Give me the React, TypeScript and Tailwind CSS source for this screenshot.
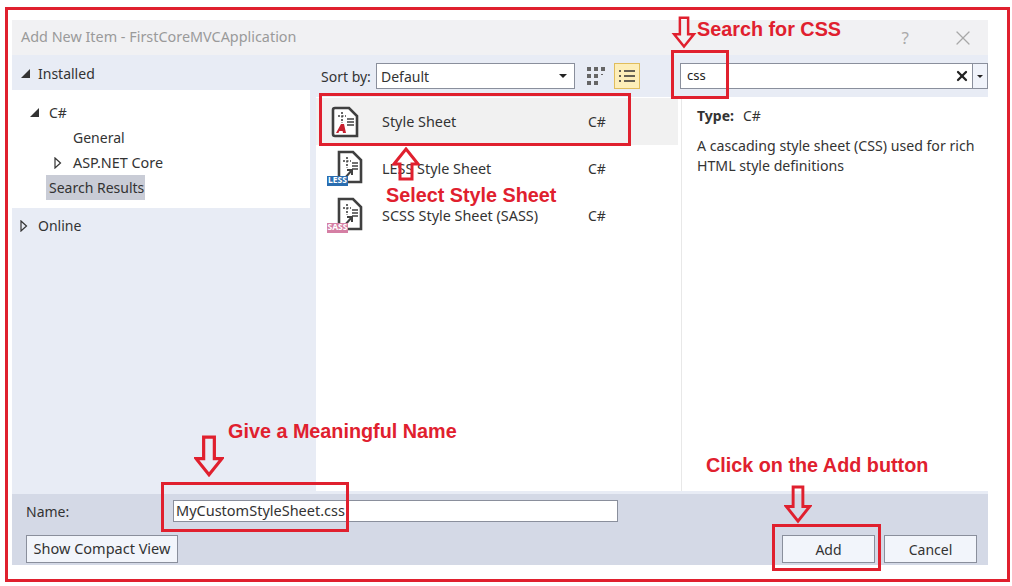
import { X } from "lucide-react";

const RED = "#e0202e";

// hollow outline arrow used by the tutorial annotations
function DownArrow({ className }: { className: string }) {
  return (
    <svg viewBox="0 0 28 40" fill="none" stroke={RED} strokeWidth="3" className={className}>
      <path d="M9 2h10v20h7L14 37 2 22h7z" />
    </svg>
  );
}

function UpArrow({ className }: { className: string }) {
  return (
    <svg viewBox="0 0 28 34" fill="none" stroke={RED} strokeWidth="3" className={className}>
      <path d="M14 2l12 15h-6v15H8V17H2z" />
    </svg>
  );
}

function Collapsed({ className }: { className: string }) {
  return (
    <svg viewBox="0 0 8 12" fill="none" stroke="#333" strokeWidth="1.2" className={className}>
      <path d="M1 1l5.5 5L1 11z" />
    </svg>
  );
}

function Expanded({ className }: { className: string }) {
  return (
    <svg viewBox="0 0 9 9" fill="#333" className={className}>
      <path d="M9 0v9H0z" />
    </svg>
  );
}

function SheetIcon({ badge, large }: { badge?: "LESS" | "SASS"; large?: boolean }) {
  const stroke = "#404040";
  return (
    <div className="relative w-[37px] h-[40px]">
      <svg viewBox="0 0 37 40" fill="none" className="absolute inset-0 w-[37px] h-[40px]">
        <path
          d={large ? "M9 6h14l8 8v20H9a2 2 0 0 1-2-2V8a2 2 0 0 1 2-2z" : "M13 3h14l8 8v22H13z"}
          fill="#fff"
          stroke={stroke}
          strokeWidth="2.6"
        />
        <path
          d={large ? "M16 10v11M12 14h8" : "M21 8v11M17 12h8"}
          stroke={stroke}
          strokeWidth="1.6"
          strokeDasharray="2 1.5"
        />
        <path
          d={large ? "M21 17h7M21 20h7M21 23h7" : "M26 14h6M26 17h6M26 20h6"}
          stroke={stroke}
          strokeWidth="1.5"
        />
        {large ? (
          <path d="M10 31l5-9h3l2 9h-3l-.4-2h-3.2l-1 2z" fill="#c8202f" />
        ) : (
          <path d="M19 29l7-8m-5 0h5v5" stroke={stroke} strokeWidth="2" />
        )}
      </svg>
      {badge && (
        <span
          className={`absolute left-[1px] bottom-[3px] h-[10px] w-[21px] flex items-center justify-center text-white text-[8.5px] font-bold leading-none ${
            badge === "LESS" ? "bg-[#2a6db0]" : "bg-[#d57fa4]"
          }`}
        >
          {badge}
        </span>
      )}
    </div>
  );
}

function ResultRow({
  name,
  badge,
  selected,
}: {
  name: string;
  badge?: "LESS" | "SASS";
  selected?: boolean;
}) {
  return (
    <div className={`flex items-center h-[47px] pl-[10px] ${selected ? "bg-[#f1f1f1]" : ""}`}>
      <div className="w-[56px]">
        <SheetIcon badge={badge} large={selected} />
      </div>
      <span className="w-[206px] text-[14.4px]">{name}</span>
      <span>C#</span>
    </div>
  );
}

function DialogButton({ label, className }: { label: string; className: string }) {
  return (
    <button className={`h-[28px] border border-[#8a8f9c] bg-[#f2f5fb] text-center ${className}`}>
      {label}
    </button>
  );
}

export default function App() {
  return (
    <div
      className="relative w-[1012px] h-[586px] bg-white overflow-hidden text-[14px] text-[#333]"
      style={{ fontFamily: '"Noto Sans", sans-serif' }}
    >
      <div className="ml-[5px] mt-[7px] w-[1005px] h-[575px] border-[3px] border-[#e0202e] pl-[4px] pt-[10px]">
        <div className="w-[976px] h-[545px] flex flex-col">
          {/* Title bar */}
          <div className="h-[35px] flex items-center justify-between pl-[9px] pr-[13px] bg-[#f1f1f3] text-[#9a9a9a]">
            <span className="text-[14.4px] pb-[2px]">Add New Item - FirstCoreMVCApplication</span>
            <div className="flex items-center gap-[42px]">
              <span className="text-[17px] text-[#aaa]">?</span>
              <X className="w-[24px] h-[24px] text-[#a8a8a8]" strokeWidth={1.2} />
            </div>
          </div>

          <div className="flex flex-1 bg-[#e8ecf5]">
            {/* Left tree */}
            <div className="w-[298px] flex flex-col">
              <div className="h-[35px] flex items-center pl-[9px] pt-[2px]">
                <Expanded className="w-[9px] h-[9px]" />
                <span className="ml-[8px]">Installed</span>
              </div>
              <div className="h-[118px] bg-white pt-[10px]">
                <div className="h-[25px] flex items-center pl-[18px]">
                  <Expanded className="w-[9px] h-[9px]" />
                  <span className="ml-[10px]">C#</span>
                </div>
                <div className="h-[25px] flex items-center pl-[61px]">General</div>
                <div className="h-[25px] flex items-center pl-[42px]">
                  <Collapsed className="w-[8px] h-[12px]" />
                  <span className="ml-[11px] text-[14.4px]">ASP.NET Core</span>
                </div>
                <div className="h-[25px] ml-[34px] w-[99px] bg-[#c9ccd6] flex items-center pl-[3px]">
                  Search Results
                </div>
              </div>
              <div className="h-[35px] flex items-center pl-[8px]">
                <Collapsed className="w-[8px] h-[12px]" />
                <span className="ml-[10px]">Online</span>
              </div>
            </div>

            {/* Results and description */}
            <div className="flex-1 ml-[6px] flex flex-col">
              <div className="h-[42px] flex items-start pt-[8px]">
                <div className="w-[364px] flex items-center">
                  <span className="ml-[5px] w-[55px]">Sort by:</span>
                  <div className="w-[199px] h-[26px] border border-[#8a8f9c] bg-white flex items-center justify-between px-[4px]">
                    <span>Default</span>
                    <span className="mr-[3px] w-0 h-0 border-x-[4px] border-x-transparent border-t-[4px] border-t-[#222]" />
                  </div>
                  <svg viewBox="0 0 20 20" fill="#666" className="ml-[11px] w-[20px] h-[20px]">
                    <path d="M1 1h4v4H1zM8 1h4v4H8zM15 1h4v4h-4zM1 8h4v4H1zM8 8h4v4H8zM15 8h2v1h-2zM1 15h4v4H1zM8 15h4v4H8z" />
                  </svg>
                  <div className="ml-[8px] w-[26px] h-[26px] bg-[#fdeeb9] border border-[#e0bd5c] flex items-center justify-center">
                    <svg viewBox="0 0 16 14" stroke="#333" strokeWidth="1.4" className="w-[16px] h-[14px]">
                      <path d="M0 2h2M5 2h11M0 7h2M5 7h11M0 12h2M5 12h11" />
                    </svg>
                  </div>
                </div>
                <div className="w-[308px] h-[26px] border border-[#8a8f9c] bg-white flex items-center">
                  <span className="flex-1 pl-[6px] text-[13px] text-[#222]">css</span>
                  <X className="w-[16px] h-[16px] mr-[2px] text-[#222]" strokeWidth={3.4} />
                  <div className="w-[15px] h-full border-l border-[#8a8f9c] bg-[#f0f3fa] flex items-center justify-center">
                    <span className="w-0 h-0 border-x-[3px] border-x-transparent border-t-[3px] border-t-[#222]" />
                  </div>
                </div>
              </div>

              <div className="flex flex-1">
                <div className="w-[365px] bg-white pt-[1px] pr-[3px]">
                  <ResultRow name="Style Sheet" selected />
                  <ResultRow name="LESS Style Sheet" badge="LESS" />
                  <ResultRow name="SCSS Style Sheet (SASS)" badge="SASS" />
                </div>
                <div className="flex-1 bg-white border-l border-[#e8e8e8] pl-[15px] pt-[9px] leading-[20px]">
                  <div>
                    <span className="font-bold">Type:</span>
                    <span className="ml-[9px]">C#</span>
                  </div>
                  <p className="mt-[10px] text-[14.15px]">
                    A cascading style sheet (CSS) used for rich
                    <br />
                    HTML style definitions
                  </p>
                </div>
              </div>
            </div>
          </div>

          {/* Name and buttons */}
          <div className="h-[74px] bg-[#d4d9e6] border-t-[3px] border-[#e8ecf5]">
            <div className="flex items-center mt-[6px] h-[22px]">
              <span className="ml-[14px] w-[147px]">Name:</span>
              <div className="w-[445px] h-[22px] border border-[#8a8f9c] bg-white pl-[2px] flex items-center text-[14.5px]">
                MyCustomStyleSheet.css
              </div>
            </div>
            <div className="flex items-center mt-[13px]">
              <DialogButton label="Show Compact View" className="ml-[14px] w-[152px] text-[14.5px]" />
              <DialogButton label="Add" className="ml-[604px] w-[93px]" />
              <DialogButton label="Cancel" className="ml-[9px] w-[93px]" />
            </div>
          </div>
        </div>
      </div>

      {/* Tutorial annotations drawn over the dialog */}
      <div
        className="pointer-events-none text-[#e0202e] font-bold text-[19.8px] leading-none"
        style={{ fontFamily: '"Liberation Sans", sans-serif' }}
      >
        <span className="absolute left-[697px] top-[20px]">Search for CSS</span>
        <span className="absolute left-[386px] top-[186px]">Select Style Sheet</span>
        <span className="absolute left-[228px] top-[422px]">Give a Meaningful Name</span>
        <span className="absolute left-[706px] top-[456px]">Click on the Add button</span>

        <div className="absolute left-[671px] top-[50px] w-[58px] h-[49px] border-[3px] border-[#e0202e]" />
        <div className="absolute left-[319px] top-[93px] w-[312px] h-[53px] border-[3px] border-[#e0202e]" />
        <div className="absolute left-[161px] top-[482px] w-[188px] h-[50px] border-[3px] border-[#e0202e]" />
        <div className="absolute left-[772px] top-[524px] w-[109px] h-[47px] border-[3px] border-[#e0202e]" />

        <DownArrow className="absolute left-[671px] top-[16px] w-[26px] h-[33px]" />
        <UpArrow className="absolute left-[392px] top-[147px] w-[28px] h-[34px]" />
        <DownArrow className="absolute left-[194px] top-[435px] w-[30px] h-[43px]" />
        <DownArrow className="absolute left-[784px] top-[485px] w-[28px] h-[39px]" />
      </div>
    </div>
  );
}
